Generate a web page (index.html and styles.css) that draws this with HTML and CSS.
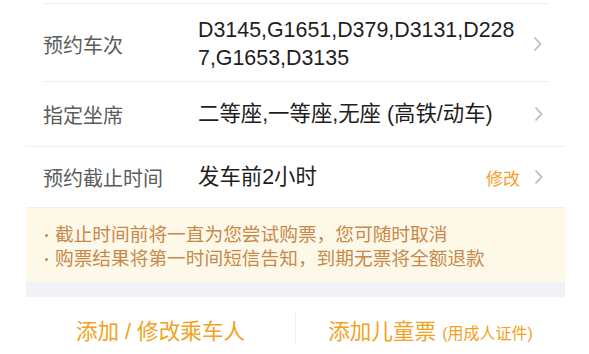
FILE: index.html
```html
<!DOCTYPE html>
<html lang="zh-CN">
<head>
  <meta charset="UTF-8">
  <title>预约抢票</title>
  <link rel="stylesheet" href="styles.css">
</head>
<body>

<div class="card">
  <div class="top-gap"></div>

  <!-- 预约车次 -->
  <div class="row">
    <div class="row-inner row-tall">
      <div class="label">预约车次</div>
      <div class="value trains">D3145,G1651,D379,D3131,D2287,G1653,D3135</div>
      <svg class="arrow" width="9" height="16" viewBox="0 0 9 16"><polyline points="1.5,1.5 7.5,8 1.5,14.5" fill="none" stroke="#bdbdbd" stroke-width="1.8"/></svg>
    </div>
  </div>

  <!-- 指定坐席 -->
  <div class="row row-last">
    <div class="row-inner row-seat">
      <div class="label">指定坐席</div>
      <div class="value">二等座,一等座,无座 (高铁/动车)</div>
      <svg class="arrow" width="9" height="16" viewBox="0 0 9 16"><polyline points="1.5,1.5 7.5,8 1.5,14.5" fill="none" stroke="#bdbdbd" stroke-width="1.8"/></svg>
    </div>
  </div>

  <!-- 截止时间 -->
  <div class="row row-last">
    <div class="row-inner row-deadline">
      <div class="label">预约截止时间</div>
      <div class="value">发车前2小时</div>
      <div class="edit">修改</div>
      <svg class="arrow" width="9" height="16" viewBox="0 0 9 16"><polyline points="1.5,1.5 7.5,8 1.5,14.5" fill="none" stroke="#bdbdbd" stroke-width="1.8"/></svg>
    </div>
  </div>

  <div class="notice">
    <div class="tip">截止时间前将一直为您尝试购票，您可随时取消</div>
    <div class="tip">购票结果将第一时间短信告知，到期无票将全额退款</div>
  </div>

  <div class="strip"></div>

  <div class="actions">
    <div class="action">添加 / 修改乘车人</div>
    <div class="divider"></div>
    <div class="action">添加儿童票 <small>(用成人证件)</small></div>
  </div>
</div>

</body>
</html>
```

FILE: styles.css
```css
body {
  margin: 0;
  background: #fff;
  font-family: "Liberation Sans", "Noto Sans CJK SC", sans-serif;
}

.card {
  width: 539px;
  margin-left: 26px;
  background: #fff;
}

.top-gap {
  height: 3px;
  margin: 0 16px 0 17px;
  border-bottom: 1px solid #f0f0f0;
}

.row {
  padding-left: 17px;
}

.row-inner {
  display: flex;
  align-items: center;
  padding-right: 6px;
  margin-right: 16px;
  border-bottom: 1px solid #f0f0f0;
}

.row-last {
  padding-left: 0;
}

.row-last .row-inner {
  padding-left: 17px;
  margin-right: 0;
  padding-right: 22px;
}

.row-tall {
  height: 78px;
  padding-top: 3px;
  box-sizing: border-box;
}

.row-seat {
  height: 64px;
}

.row-deadline {
  height: 60px;
}

.label {
  width: 155px;
  flex-shrink: 0;
  font-size: 20px;
  color: #5c5c5c;
}

.value {
  flex: 1;
  font-size: 21.4px;
  line-height: 28px;
  color: #1e1e1e;
}

.trains {
  max-width: 322px;
  word-break: break-all;
  margin-right: 13px;
}

.edit {
  font-size: 17px;
  color: #f2a21c;
  margin-right: 14px;
}

.arrow {
  flex-shrink: 0;
}

.notice {
  background: #fef8e8;
  padding: 15px 0 11px 19px;
}

.tip {
  position: relative;
  padding-left: 10px;
  font-size: 18.7px;
  line-height: 24px;
  color: #c58a4c;
}

.tip::before {
  content: "";
  position: absolute;
  left: 0;
  top: 11px;
  width: 3px;
  height: 3px;
  border-radius: 50%;
  background: #c58a4c;
}

.strip {
  height: 15px;
  background: #f1f2f5;
}

.actions {
  display: flex;
  align-items: center;
  height: 64px;
}

.action {
  flex: 1;
  text-align: center;
  font-size: 21.6px;
  color: #f2a21c;
}

.action small {
  font-size: 16px;
}

.divider {
  width: 1px;
  height: 32px;
  background: #f0f0f0;
}
```
